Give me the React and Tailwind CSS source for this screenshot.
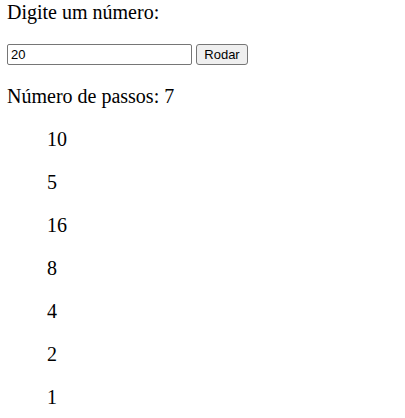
import { useState } from "react";

function collatz(start) {
  const steps = [];
  let n = start;
  while (n > 1 && steps.length < 1000) {
    n = n % 2 === 0 ? n / 2 : 3 * n + 1;
    steps.push(n);
  }
  return steps;
}

export default function App() {
  const [value, setValue] = useState("20");
  const [steps, setSteps] = useState(() => collatz(20));

  function handleSubmit(event) {
    event.preventDefault();
    setSteps(collatz(parseInt(value, 10) || 0));
  }

  return (
    <main className="bg-white px-[7px] pt-px font-['Liberation_Serif',serif] text-[20px] leading-[23px] text-black">
      <form onSubmit={handleSubmit}>
        <label htmlFor="numero" className="block">
          Digite um número:
        </label>
        <div className="mt-5 flex items-center gap-1 font-['Liberation_Sans',sans-serif] text-[13px] leading-[15px]">
          <input
            id="numero"
            type="text"
            value={value}
            onChange={(event) => setValue(event.target.value)}
            className="h-[21px] w-[185px] rounded-[2px] border border-[#767676] bg-white px-[3px]"
          />
          <button
            type="submit"
            className="h-[21px] w-[52px] rounded-[3px] border border-[#767676] bg-[#efefef]"
          >
            Rodar
          </button>
        </div>
      </form>
      <p className="mt-5">Número de passos: {steps.length}</p>
      <ul className="mt-5 flex flex-col gap-5 pl-10">
        {steps.map((step, index) => (
          <li key={index}>{step}</li>
        ))}
      </ul>
    </main>
  );
}
